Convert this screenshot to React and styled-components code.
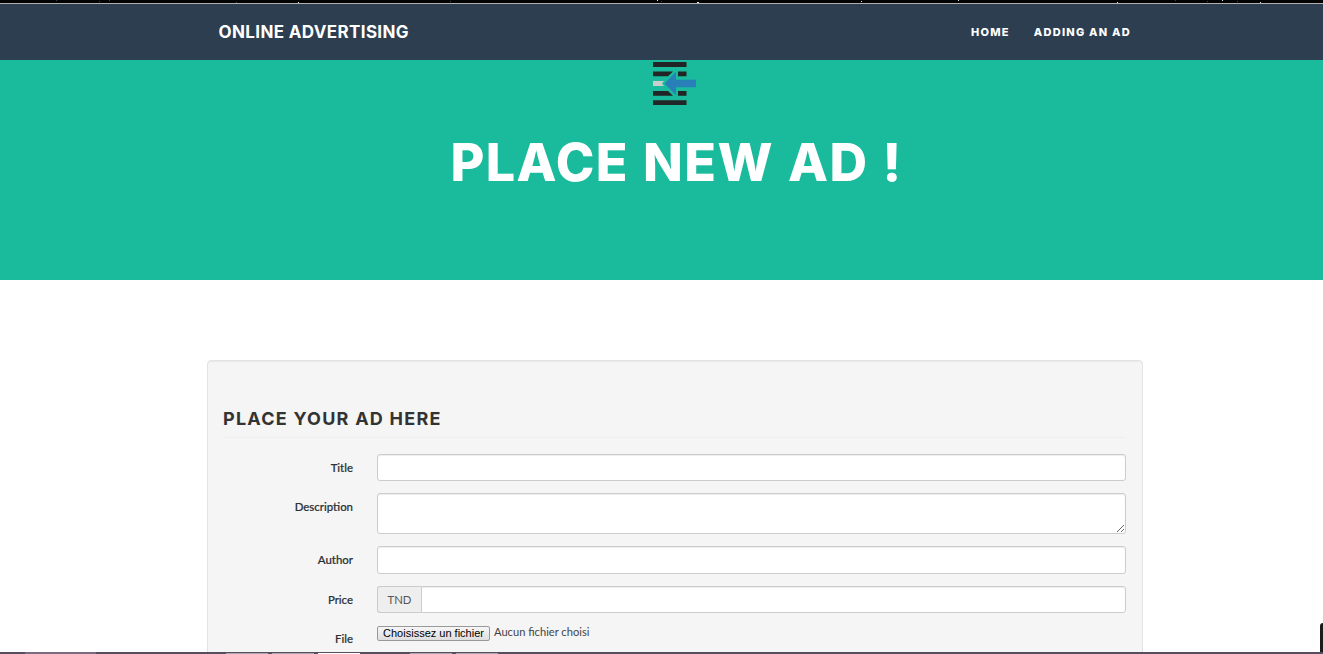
import React from "react";
import styled, { createGlobalStyle } from "styled-components";

const GlobalStyle = createGlobalStyle`
  *, *::before, *::after { box-sizing: border-box; }
  html, body { margin: 0; height: 100%; overflow: hidden; background: #fff; }
  body { font-family: Lato, "Liberation Sans", sans-serif; font-size: 11.3px; color: #2c3136; }
`;

const Page = styled.div`
  height: 654px;
  display: flex;
  flex-direction: column;
  overflow: hidden;
  position: relative;
`;

const TopEdge = styled.svg`
  flex: none;
  display: block;
  width: 100%;
  height: 4px;
`;

const Navbar = styled.nav`
  flex: none;
  height: 56px;
  padding: 0 192px 0 218.5px;
  display: flex;
  justify-content: space-between;
  align-items: center;
  background: #2c3e50;
  color: #fff;
`;

const Brand = styled.a`
  font: 700 17px/20px Inter, sans-serif;
  letter-spacing: 0.36px;
  white-space: nowrap;
`;

const NavLinks = styled.div`
  display: flex;
  gap: 24px;
`;

const NavLink = styled.a`
  font: 800 11px/16px Inter, sans-serif;
  letter-spacing: 1.24px;
  white-space: nowrap;
`;

const Hero = styled.header`
  flex: none;
  height: 220px;
  padding: 1px 0 0 27px;
  display: flex;
  flex-direction: column;
  align-items: center;
  background: #1abb9c;
  color: #fff;
`;

const HeroIcon = styled.svg`
  display: block;
  width: 46px;
  height: 46px;
`;

const HeroTitle = styled.h1`
  margin: 26px 0 0 3px;
  font: 800 52px/60px Inter, sans-serif;
  letter-spacing: 1.45px;
  word-spacing: 1.2px;
  white-space: nowrap;
`;

const Main = styled.main`
  flex: 1;
  min-height: 0;
  padding: 80px 180px 0 207px;
  overflow: hidden;
`;

const Panel = styled.section`
  height: 420px;
  padding: 46px 16px 0 15px;
  border: 1px solid #e3e3e3;
  border-radius: 4px;
  background: #f5f5f5;
  box-shadow: inset 0 1px 1px rgba(0, 0, 0, 0.05);
`;

const Legend = styled.h2`
  margin: 0 0 16px;
  height: 31px;
  border-bottom: 1px solid #eee;
  font: 700 18px/24px Inter, sans-serif;
  letter-spacing: 1.24px;
  color: #333;
  white-space: nowrap;
`;

const Row = styled.div`
  display: flex;
  align-items: flex-start;
  height: ${(p) => p.$height}px;
  margin-bottom: 12px;
`;

const Label = styled.label`
  width: 130px;
  margin-right: 24px;
  padding-top: 6px;
  text-align: right;
  font-size: 11.4px;
  font-weight: 500;
  line-height: 16px;
  -webkit-text-stroke: 0.2px currentColor;
`;

const Field = styled.input`
  flex: 1;
  min-width: 0;
  height: 100%;
  padding: 4px 10px;
  border: 1px solid #ccc;
  border-radius: ${(p) => (p.$joined ? "0 3px 3px 0" : "3px")};
  background: #fff;
  box-shadow: inset 0 1px 1px rgba(0, 0, 0, 0.075);
  outline: none;
`;

const TextArea = styled(Field)`
  display: block;
  resize: vertical;
`;

const Addon = styled.span`
  width: 44px;
  height: 100%;
  border: 1px solid #ccc;
  border-right: 0;
  border-radius: 3px 0 0 3px;
  background: #eee;
  color: #555;
  text-align: center;
  line-height: 26px;
`;

const FileButton = styled.button`
  width: 113px;
  height: 15px;
  margin-top: 1px;
  padding: 0;
  border: 1px solid #999;
  border-radius: 2px;
  background: linear-gradient(#f6f6f6, #dedede);
  color: #000;
  font: 11px/13px "Liberation Sans", sans-serif;
  white-space: nowrap;
`;

const FileStatus = styled.span`
  margin-left: 4px;
  color: #444;
  font-size: 11.15px;
  line-height: 14px;
`;

const BottomEdge = styled.svg`
  flex: none;
  display: block;
  width: 100%;
  height: 2px;
`;

const SideTab = styled.div`
  position: absolute;
  right: 0;
  bottom: 2px;
  width: 3px;
  height: 29px;
  border-radius: 3px 0 0 0;
  background: #1c1c1c;
`;

const STARS = [56, 99, 109, 236, 298, 450, 657, 661, 697, 861, 958, 1117, 1175, 1207, 1222, 1237, 1260];
const TASKS = [226, 272, 318, 410, 456];

export default function App() {
  return (
    <Page>
      <GlobalStyle />
      <TopEdge viewBox="0 0 1323 4" preserveAspectRatio="none" shapeRendering="crispEdges">
        <rect width="1323" height="3" fill="#030304" />
        <rect y="3" width="1323" height="1" fill="#b3b0ae" />
        {STARS.map((x, i) => (
          <rect key={x} x={x} y={[298, 697, 1117, 1260, 236].includes(x) ? 2 : i % 2} width={x === 697 ? 2 : 1} height="1" fill={[298, 657, 697, 861, 958, 1117, 1222, 1260].includes(x) ? "#d8ecff" : "#34425c"} />
        ))}
      </TopEdge>
      <Navbar>
        <Brand>ONLINE ADVERTISING</Brand>
        <NavLinks>
          <NavLink>HOME</NavLink>
          <NavLink>ADDING AN AD</NavLink>
        </NavLinks>
      </Navbar>
      <Hero>
        <HeroIcon viewBox="652 61 46 46">
          <g fill="#222525">
            <path d="M653 62h33.5v5H653zM653 71.5h20l-5 4.7h-15zM678 71.5h8.5v4.7H678zM653 91h15l5 4.7h-20zM678 91h8.5v4.7H678zM653 100.3h33.5v4.7H653z" />
          </g>
          <path d="M653 81h11l-2 2.5 2 2.5h-11z" fill="#c9cdcc" />
          <path d="M664.5 83.5 676 71.7v8.1h20v7.4h-20v8.1z" fill="#2980b9" />
        </HeroIcon>
        <HeroTitle>PLACE NEW AD !</HeroTitle>
      </Hero>
      <Main>
        <Panel>
          <Legend>PLACE YOUR AD HERE</Legend>
          <Row $height={27}>
            <Label htmlFor="title">Title</Label>
            <Field id="title" />
          </Row>
          <Row $height={41}>
            <Label htmlFor="description">Description</Label>
            <TextArea as="textarea" id="description" />
          </Row>
          <Row $height={28}>
            <Label htmlFor="author">Author</Label>
            <Field id="author" />
          </Row>
          <Row $height={27}>
            <Label htmlFor="price">Price</Label>
            <Addon>TND</Addon>
            <Field id="price" $joined />
          </Row>
          <Row $height={27}>
            <Label htmlFor="file">File</Label>
            <FileButton id="file" type="button">Choisissez un fichier</FileButton>
            <FileStatus>Aucun fichier choisi</FileStatus>
          </Row>
        </Panel>
      </Main>
      <SideTab />
      <BottomEdge viewBox="0 0 1323 2" preserveAspectRatio="none" shapeRendering="crispEdges">
        <rect width="1323" height="2" fill="#544e5e" />
        <rect x="25" width="71" height="2" fill="#7c6b80" />
        {TASKS.map((x) => (
          <rect key={x} x={x} y="1" width="42" height="1" fill={x === 318 ? "#fff" : "#aaa6b0"} />
        ))}
      </BottomEdge>
    </Page>
  );
}
